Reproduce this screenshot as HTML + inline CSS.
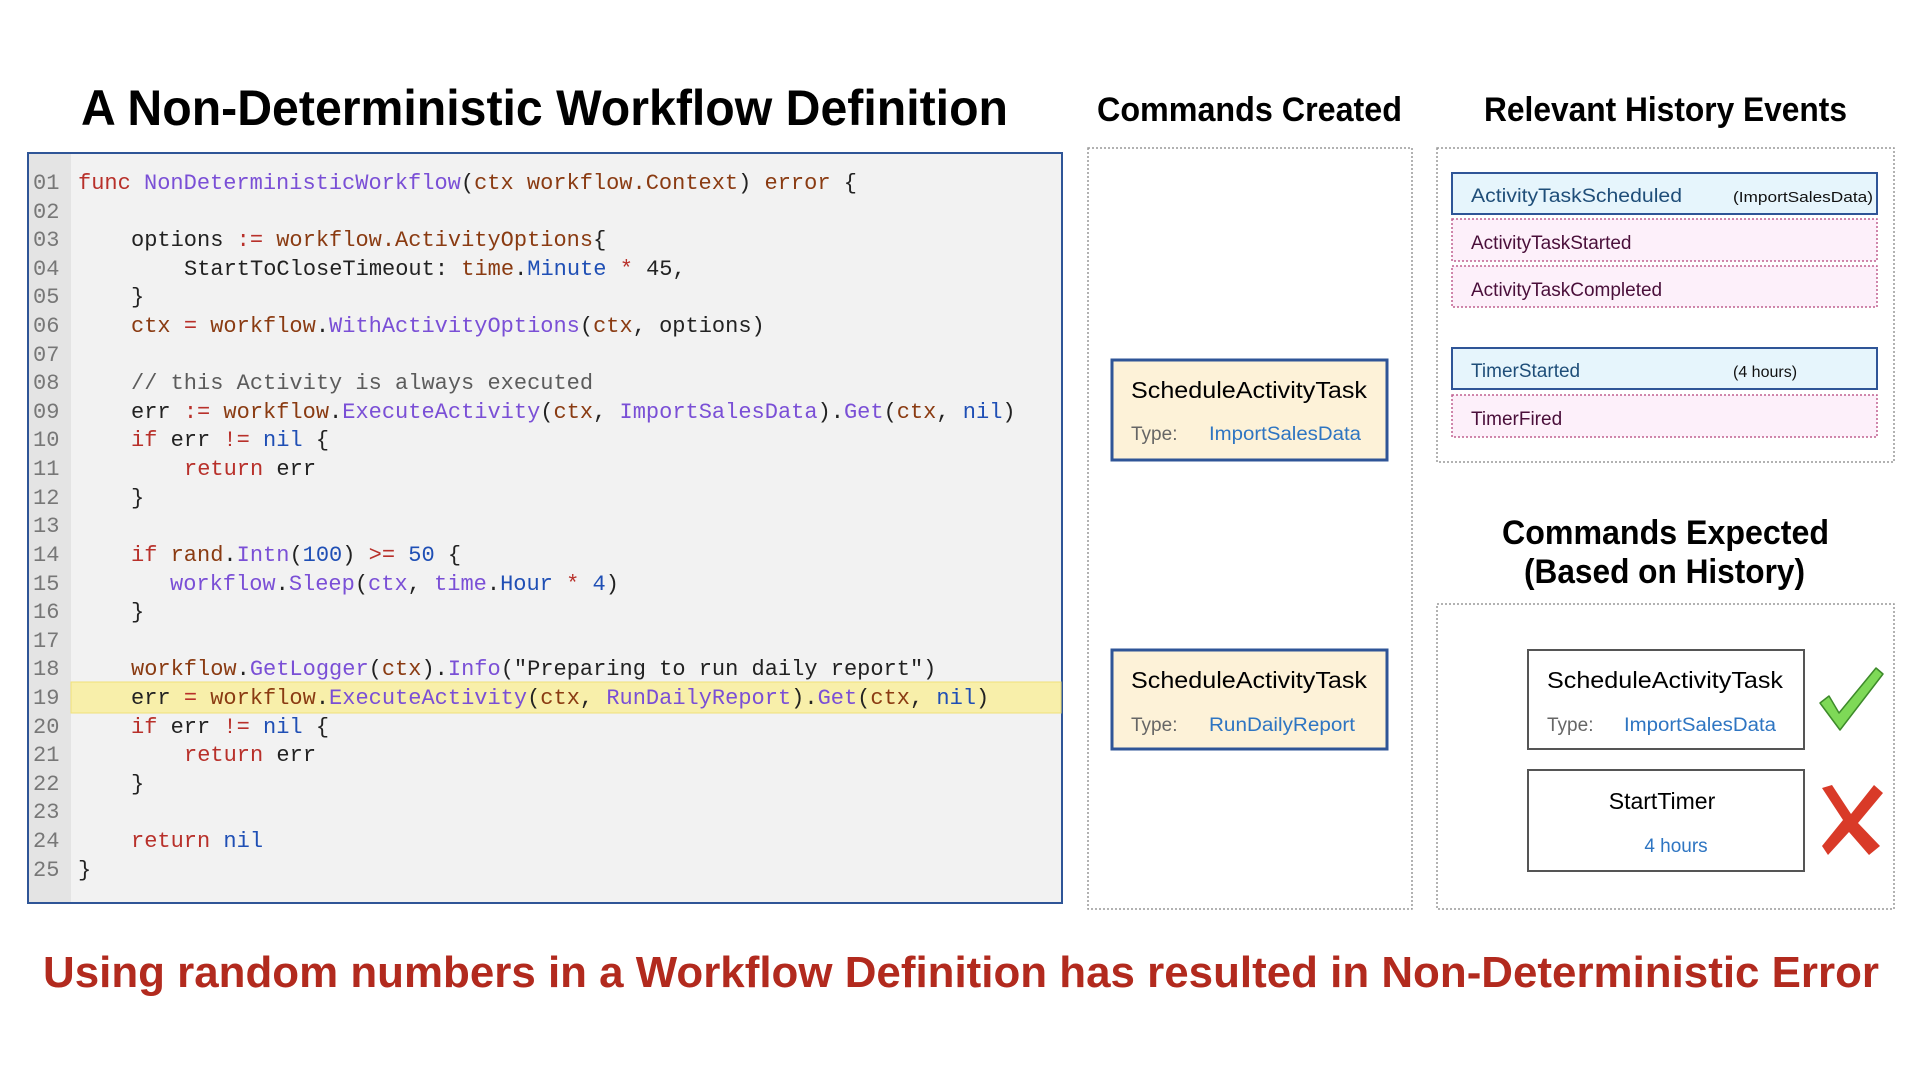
<!DOCTYPE html>
<html><head><meta charset="utf-8"><style>
html,body{margin:0;padding:0;background:#fff;width:1920px;height:1080px;overflow:hidden}
svg{display:block}
.m{font-family:"Liberation Mono",monospace;font-size:22px}
.m text{white-space:pre}
.s{font-family:"Liberation Sans",sans-serif}
.r{fill:#b8302a}.b{fill:#8a3b12}.p{fill:#7a4fd6}.u{fill:#1f4fb5}.c{fill:#5c5c5c}.n{fill:#777}
</style></head><body>
<svg width="1920" height="1080" viewBox="0 0 1920 1080" xmlns="http://www.w3.org/2000/svg">
<text class="s" x="81" y="125" font-size="50" font-weight="bold" textLength="927" lengthAdjust="spacingAndGlyphs">A Non-Deterministic Workflow Definition</text>
<text class="s" x="1097" y="121" font-size="34" font-weight="bold" textLength="305" lengthAdjust="spacingAndGlyphs">Commands Created</text>
<text class="s" x="1484" y="121" font-size="34" font-weight="bold" textLength="363" lengthAdjust="spacingAndGlyphs">Relevant History Events</text>
<text class="s" x="1502" y="544" font-size="34" font-weight="bold" textLength="327" lengthAdjust="spacingAndGlyphs">Commands Expected</text>
<text class="s" x="1524" y="583" font-size="34" font-weight="bold" textLength="281" lengthAdjust="spacingAndGlyphs">(Based on History)</text>

<rect x="28" y="153" width="1034" height="750" fill="#f2f2f2" stroke="#2f5597" stroke-width="2"/>
<rect x="29" y="154" width="42" height="748" fill="#e4e4e4"/>
<rect x="71" y="682" width="990" height="31" fill="#f8efaa" stroke="#f0e07a" stroke-width="1"/>
<g class="m" fill="#222">
<g class="n">
<text x="33" y="189">01</text><text x="33" y="218">02</text><text x="33" y="246">03</text><text x="33" y="275">04</text><text x="33" y="303">05</text><text x="33" y="332">06</text><text x="33" y="361">07</text><text x="33" y="389">08</text><text x="33" y="418">09</text><text x="33" y="446">10</text><text x="33" y="475">11</text><text x="33" y="504">12</text><text x="33" y="532">13</text><text x="33" y="561">14</text><text x="33" y="590">15</text><text x="33" y="618">16</text><text x="33" y="647">17</text><text x="33" y="675">18</text><text x="33" y="704">19</text><text x="33" y="733">20</text><text x="33" y="761">21</text><text x="33" y="790">22</text><text x="33" y="818">23</text><text x="33" y="847">24</text><text x="33" y="876">25</text>
</g>
<text x="78" y="189"><tspan class="r">func</tspan> <tspan class="p">NonDeterministicWorkflow</tspan>(<tspan class="b">ctx</tspan> <tspan class="b">workflow.Context</tspan>) <tspan class="b">error</tspan> {</text>
<text x="131" y="246">options <tspan class="r">:=</tspan> <tspan class="b">workflow.ActivityOptions</tspan>{</text>
<text x="184" y="275">StartToCloseTimeout: <tspan class="b">time</tspan>.<tspan class="u">Minute</tspan> <tspan class="r">*</tspan> 45,</text>
<text x="131" y="303">}</text>
<text x="131" y="332"><tspan class="b">ctx</tspan> <tspan class="r">=</tspan> <tspan class="b">workflow</tspan>.<tspan class="p">WithActivityOptions</tspan>(<tspan class="b">ctx</tspan>, options)</text>
<text x="131" y="389" class="c">// this Activity is always executed</text>
<text x="131" y="418">err <tspan class="r">:=</tspan> <tspan class="b">workflow</tspan>.<tspan class="p">ExecuteActivity</tspan>(<tspan class="b">ctx</tspan>, <tspan class="p">ImportSalesData</tspan>).<tspan class="p">Get</tspan>(<tspan class="b">ctx</tspan>, <tspan class="u">nil</tspan>)</text>
<text x="131" y="446"><tspan class="r">if</tspan> err <tspan class="r">!=</tspan> <tspan class="u">nil</tspan> {</text>
<text x="184" y="475"><tspan class="r">return</tspan> err</text>
<text x="131" y="504">}</text>
<text x="131" y="561"><tspan class="r">if</tspan> <tspan class="b">rand</tspan>.<tspan class="p">Intn</tspan>(<tspan class="u">100</tspan>) <tspan class="r">&gt;=</tspan> <tspan class="u">50</tspan> {</text>
<text x="170" y="590"><tspan class="p">workflow</tspan>.<tspan class="p">Sleep</tspan>(<tspan class="p">ctx</tspan>, <tspan class="p">time</tspan>.<tspan class="u">Hour</tspan> <tspan class="r">*</tspan> <tspan class="u">4</tspan>)</text>
<text x="131" y="618">}</text>
<text x="131" y="675"><tspan class="b">workflow</tspan>.<tspan class="p">GetLogger</tspan>(<tspan class="b">ctx</tspan>).<tspan class="p">Info</tspan>("Preparing to run daily report")</text>
<text x="131" y="704">err <tspan class="r">=</tspan> <tspan class="b">workflow</tspan>.<tspan class="p">ExecuteActivity</tspan>(<tspan class="b">ctx</tspan>, <tspan class="p">RunDailyReport</tspan>).<tspan class="p">Get</tspan>(<tspan class="b">ctx</tspan>, <tspan class="u">nil</tspan>)</text>
<text x="131" y="733"><tspan class="r">if</tspan> err <tspan class="r">!=</tspan> <tspan class="u">nil</tspan> {</text>
<text x="184" y="761"><tspan class="r">return</tspan> err</text>
<text x="131" y="790">}</text>
<text x="131" y="847"><tspan class="r">return</tspan> <tspan class="u">nil</tspan></text>
<text x="78" y="876">}</text>
</g>

<rect x="1088" y="148" width="324" height="761" fill="none" stroke="#999" stroke-width="1.5" stroke-dasharray="2 2"/>
<rect x="1112" y="360" width="275" height="100" fill="#fdf2d8" stroke="#2f5597" stroke-width="3"/>
<text class="s" x="1131" y="398" font-size="23" textLength="236" lengthAdjust="spacingAndGlyphs">ScheduleActivityTask</text>
<text class="s" x="1131" y="440" font-size="19" fill="#666">Type:</text>
<text class="s" x="1209" y="440" font-size="19" fill="#2e75c2" textLength="152" lengthAdjust="spacingAndGlyphs">ImportSalesData</text>
<rect x="1112" y="650" width="275" height="99" fill="#fdf2d8" stroke="#2f5597" stroke-width="3"/>
<text class="s" x="1131" y="688" font-size="23" textLength="236" lengthAdjust="spacingAndGlyphs">ScheduleActivityTask</text>
<text class="s" x="1131" y="731" font-size="19" fill="#666">Type:</text>
<text class="s" x="1209" y="731" font-size="19" fill="#2e75c2" textLength="146" lengthAdjust="spacingAndGlyphs">RunDailyReport</text>

<rect x="1437" y="148" width="457" height="314" fill="none" stroke="#999" stroke-width="1.5" stroke-dasharray="2 2"/>
<rect x="1452" y="173" width="425" height="41" fill="#e6f5fc" stroke="#2f5597" stroke-width="2"/>
<text class="s" x="1471" y="202" font-size="19" fill="#1f4e79" textLength="211" lengthAdjust="spacingAndGlyphs">ActivityTaskScheduled</text>
<text class="s" x="1733" y="202" font-size="15" fill="#111" textLength="140" lengthAdjust="spacingAndGlyphs">(ImportSalesData)</text>
<rect x="1452" y="219" width="425" height="42" fill="#fdf0fa" stroke="#c06090" stroke-width="1.5" stroke-dasharray="2 2"/>
<text class="s" x="1471" y="249" font-size="19" fill="#4a0f3a">ActivityTaskStarted</text>
<rect x="1452" y="266" width="425" height="41" fill="#fdf0fa" stroke="#c06090" stroke-width="1.5" stroke-dasharray="2 2"/>
<text class="s" x="1471" y="296" font-size="19" fill="#4a0f3a">ActivityTaskCompleted</text>
<rect x="1452" y="348" width="425" height="41" fill="#e6f5fc" stroke="#2f5597" stroke-width="2"/>
<text class="s" x="1471" y="377" font-size="19" fill="#1f4e79">TimerStarted</text>
<text class="s" x="1733" y="377" font-size="16" fill="#111">(4 hours)</text>
<rect x="1452" y="395" width="425" height="42" fill="#fdf0fa" stroke="#c06090" stroke-width="1.5" stroke-dasharray="2 2"/>
<text class="s" x="1471" y="425" font-size="19" fill="#4a0f3a">TimerFired</text>

<rect x="1437" y="604" width="457" height="305" fill="none" stroke="#999" stroke-width="1.5" stroke-dasharray="2 2"/>
<rect x="1528" y="650" width="276" height="99" fill="#fff" stroke="#555" stroke-width="2"/>
<text class="s" x="1547" y="688" font-size="23" textLength="236" lengthAdjust="spacingAndGlyphs">ScheduleActivityTask</text>
<text class="s" x="1547" y="731" font-size="19" fill="#666">Type:</text>
<text class="s" x="1624" y="731" font-size="19" fill="#2e75c2" textLength="152" lengthAdjust="spacingAndGlyphs">ImportSalesData</text>
<rect x="1528" y="770" width="276" height="101" fill="#fff" stroke="#555" stroke-width="2"/>
<text class="s" x="1662" y="809" font-size="23" text-anchor="middle">StartTimer</text>
<text class="s" x="1676" y="852" font-size="19" fill="#2e75c2" text-anchor="middle">4 hours</text>
<path d="M1820,703 L1829,696 L1839,713 L1876,668 L1883,674 L1840,730 Z" fill="#7ed957" stroke="#3d8a2a" stroke-width="1.5" stroke-linejoin="round"/>
<path d="M1822,788 L1832,785 L1851,814 L1874,785 L1883,793 L1858,823 L1880,846 L1869,855 L1849,832 L1828,855 L1822,846 L1843,820 Z" fill="#d93a28"/>

<text class="s" x="43" y="987" font-size="44" font-weight="bold" fill="#b22a1e" textLength="1836" lengthAdjust="spacingAndGlyphs">Using random numbers in a Workflow Definition has resulted in Non-Deterministic Error</text>
</svg>
</body></html>
